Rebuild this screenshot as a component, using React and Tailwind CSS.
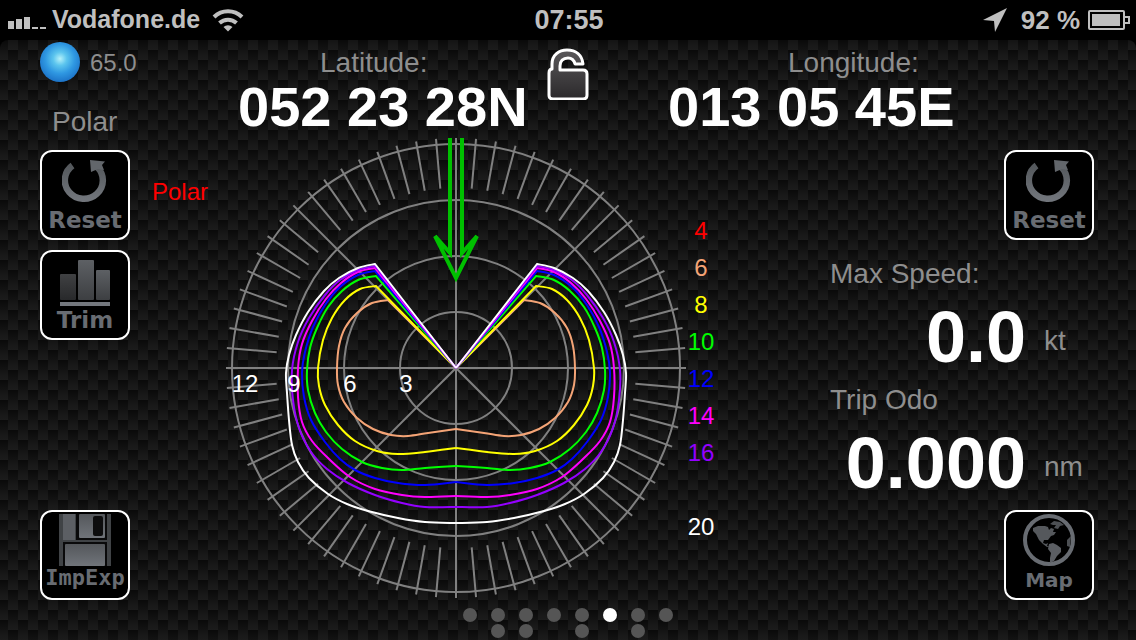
import React, { useState } from "react";

// polar curves, one half only (x, y from the centre of the dial)
const CURVES = [
  {
    color: "#f4a476",
    points: [[68, -68], [84, -65], [99, -55], [111, -40], [117, -22], [119, 0], [118, 17], [112, 34], [99, 50], [83, 61], [65, 67], [48, 68], [28, 65], [0, 61]],
  },
  {
    color: "#ffff00",
    points: [[80, -82], [96, -79], [111, -68], [124, -50], [133, -28], [138, 0], [137, 18], [131, 37], [118, 57], [101, 73], [79, 83], [58, 86], [31, 84], [0, 80]],
  },
  {
    color: "#00ff00",
    points: [[80, -92], [98, -88], [114, -77], [128, -61], [139, -40], [146, -20], [149, 2], [148, 22], [141, 45], [130, 64], [114, 81], [94, 94], [74, 100], [54, 102], [31, 100], [0, 98]],
  },
  {
    color: "#0000ff",
    points: [[81, -97], [98, -93], [116, -81], [131, -63], [143, -41], [151, -16], [154, 5], [152, 29], [145, 52], [131, 74], [116, 91], [101, 102], [81, 110], [58, 115], [31, 117], [0, 114]],
  },
  {
    color: "#ff00ff",
    points: [[81, -100], [98, -96], [115, -85], [130, -69], [144, -47], [154, -24], [158, 0], [158, 29], [154, 54], [144, 73], [128, 90], [106, 109], [81, 121], [54, 127], [31, 129], [0, 128]],
  },
  {
    color: "#9400ff",
    points: [[81, -102], [98, -98], [116, -88], [131, -73], [147, -50], [158, -26], [164, 2], [163, 32], [157, 60], [145, 84], [129, 101], [108, 115], [81, 127], [54, 135], [31, 139], [0, 139]],
  },
  {
    color: "#ffffff",
    points: [[81, -104], [98, -100], [117, -90], [132, -77], [148, -56], [160, -33], [167, -13], [170, 5], [169, 25], [167, 52], [164, 77], [158, 94], [147, 110], [128, 126], [109, 136], [88, 143], [58, 150], [31, 154], [0, 155]],
  },
];

const WIND_SPEEDS = [
  { value: "4", className: "text-[#ff0000]" },
  { value: "6", className: "text-[#f4a476]" },
  { value: "8", className: "text-[#ffff00]" },
  { value: "10", className: "text-[#00ff00]" },
  { value: "12", className: "text-[#0000ff]" },
  { value: "14", className: "text-[#ff00ff]" },
  { value: "16", className: "text-[#9400ff]" },
  { value: "", className: "" },
  { value: "20", className: "text-white" },
];

// null = no page in that spot of the second row
const PAGES = [0, 1, 2, 3, 4, 5, 6, 7, null, 8, 9, null, 10, null, 11, null];

// smooth line through all points (Catmull-Rom to bezier)
const smoothPath = (pts) => {
  let d = `M0 0L${pts[0][0]} ${pts[0][1]}`;
  for (let i = 0; i < pts.length - 1; i++) {
    const p0 = pts[i - 1] || pts[i];
    const p1 = pts[i];
    const p2 = pts[i + 1];
    const p3 = pts[i + 2] || p2;
    d += `C${p1[0] + (p2[0] - p0[0]) / 6} ${p1[1] + (p2[1] - p0[1]) / 6} `;
    d += `${p2[0] - (p3[0] - p1[0]) / 6} ${p2[1] - (p3[1] - p1[1]) / 6} `;
    d += `${p2[0]} ${p2[1]}`;
  }
  return d;
};

const StatusBar = () => (
  <header className="flex h-10 items-center bg-black pl-2 pr-1.5 font-bold text-[#bfbfbf]">
    <div className="flex flex-1 items-center">
      <svg width="38" height="12" viewBox="0 0 38 12" className="mt-1.5" fill="currentColor" aria-hidden="true">
        <rect x="0" y="4" width="6" height="8" />
        <rect x="8" y="2" width="6" height="10" />
        <rect x="16" y="0" width="6" height="12" />
        <rect x="24" y="10" width="6" height="2" />
        <rect x="32" y="10" width="6" height="2" />
      </svg>
      <span className="ml-1.5 text-[25px]">Vodafone.de</span>
      <svg className="ml-3" width="32" height="24" viewBox="0 0 32 24" fill="none" stroke="currentColor" strokeWidth="4" aria-hidden="true">
        <path d="M2 9a20 20 0 0 1 28 0" />
        <path d="M7.5 15a12.500 12.500 0 0 1 17 0" />
        <path d="M16 23.500l-4.500-4.500a6.500 6.500 0 0 1 9 0z" fill="currentColor" stroke="none" />
      </svg>
    </div>
    <span className="text-[27px]">07:55</span>
    <div className="flex flex-1 items-center justify-end">
      <svg width="24" height="24" viewBox="0 0 24 24" fill="currentColor" aria-hidden="true">
        <path d="M24 0L0 12l11 1 1 11z" />
      </svg>
      <span className="ml-3.5 text-[26px]">92 %</span>
      <svg className="ml-2" width="42" height="20" viewBox="0 0 42 20" aria-hidden="true">
        <rect x="1" y="1" width="35" height="18" rx="1" fill="none" stroke="currentColor" strokeWidth="2" />
        <rect x="4" y="4" width="28" height="12" fill="currentColor" />
        <path d="M37 7h4v6h-4" fill="none" stroke="currentColor" strokeWidth="2" />
      </svg>
    </div>
  </header>
);

const ResetIcon = () => (
  <svg width="46" height="46" viewBox="0 0 46 46" aria-hidden="true">
    <defs>
      <linearGradient id="resetFill" x1="0" y1="0" x2="0" y2="1">
        <stop offset="0" stopColor="#54585c" />
        <stop offset="1" stopColor="#71757b" />
      </linearGradient>
    </defs>
    <path d="M10.500 5.500A19 18.500 0 1 0 35 7" fill="none" stroke="url(#resetFill)" strokeWidth="6.500" />
    <path d="M28 0L43 1.500L40 5L42 10L36 9L29 12z" fill="#62666b" />
  </svg>
);

const TrimIcon = () => (
  <svg width="50" height="46" viewBox="0 0 50 46" aria-hidden="true">
    <defs>
      <linearGradient id="barDark" x1="0" y1="0" x2="0" y2="1">
        <stop offset="0" stopColor="#404143" />
        <stop offset="1" stopColor="#28292b" />
      </linearGradient>
      <linearGradient id="barLight" x1="0" y1="0" x2="0" y2="1">
        <stop offset="0" stopColor="#5d6064" />
        <stop offset="1" stopColor="#3d3f42" />
      </linearGradient>
    </defs>
    <rect x="0" y="14" width="16" height="26" rx="1" fill="url(#barDark)" />
    <rect x="18" y="0" width="16" height="40" rx="1" fill="url(#barLight)" />
    <rect x="36" y="10" width="14" height="30" rx="1" fill="url(#barLight)" />
    <rect x="0" y="42" width="50" height="4" fill="#74787e" />
  </svg>
);

const DiskIcon = () => (
  <svg width="52" height="52" viewBox="0 0 52 52" aria-hidden="true">
    <defs>
      <linearGradient id="diskFill" x1="0" y1="0" x2="0" y2="1">
        <stop offset="0" stopColor="#54575b" />
        <stop offset="1" stopColor="#70747a" />
      </linearGradient>
    </defs>
    <rect width="52" height="52" fill="#404346" />
    <rect x="4" y="0" width="12" height="26" fill="#5c5f64" />
    <path d="M17 0h31v26H17z" fill="#0a0a0b" />
    <rect x="20" y="0" width="26" height="24" rx="1" fill="url(#diskFill)" />
    <rect x="34" y="2" width="10" height="20" rx="2" fill="#0d0d0e" />
    <path d="M4 28h44v24H4z" fill="#0a0a0b" />
    <rect x="6" y="30" width="40" height="22" rx="1" fill="url(#diskFill)" />
  </svg>
);

const GlobeIcon = () => (
  <svg width="52" height="52" viewBox="0 0 52 52" aria-hidden="true">
    <circle cx="26" cy="26" r="24" fill="#000" stroke="#686c72" strokeWidth="4" />
    <path
      d="M10 14l5-2 7 0 3 1 1 3 2-2 3 1-1 3 3 0-2 3-3 1-3 4-4 0-1 3 3 1 2-1-1 3 3 1-3 0-4-3-4-4-3-6-3-3z"
      fill="#55585c"
    />
    <path d="M27 10l4-3 6 1 4 3-4 1-2 3-4-1 2-3-3 0z" fill="#4c4f53" />
    <path d="M26 30l4-1 4 2 4 3 0 4-4 4-3 5-4 2 0-5 1-5-3-4z" fill="#5b5e63" />
    <path d="M48 22l-4 4 0 6 3 1z" fill="#4c4f53" />
  </svg>
);

const LockIcon = () => (
  <svg width="42" height="52" viewBox="0 0 42 52" aria-hidden="true">
    <defs>
      <linearGradient id="lockFill" x1="0" y1="0" x2="0" y2="1">
        <stop offset="0" stopColor="#5a585a" />
        <stop offset="1" stopColor="#2b292b" />
      </linearGradient>
    </defs>
    <path
      d="M5 21V16C5 7 12 2 20 2c9 0 15 5 16 14h-8c-1-4-3-6-7-6-5 0-8 3-8 8v4h23q4 0 4 4v21q0 4-4 4H6q-4 0-4-4V25q0-4 3-4z"
      fill="url(#lockFill)"
      stroke="#fff"
      strokeWidth="3"
      strokeLinejoin="round"
    />
  </svg>
);

const IconButton = ({ icon, label, labelClass }) => (
  <button
    type="button"
    className="flex h-[90px] w-[90px] shrink-0 flex-col items-center overflow-hidden rounded-xl border-2 border-white bg-black pt-0.5"
  >
    <span className="flex h-[52px] items-end">{icon}</span>
    <span className={`whitespace-nowrap font-bold text-[#686c72] ${labelClass}`}>{label}</span>
  </button>
);

const SANS_LABEL = "font-['DejaVu_Sans'] text-[23px] leading-7";

const Coordinate = ({ label, value, className, labelClass }) => (
  <div className={className}>
    <p className={`text-[28px] leading-8 text-[#8e8e8e] ${labelClass}`}>{label}</p>
    <p className="whitespace-nowrap text-[56px] font-bold leading-[56px] text-white">{value}</p>
  </div>
);

const Reading = ({ label, value, unit }) => (
  <div>
    <p className="text-[28px] leading-8 text-[#8e8e8e]">{label}</p>
    <div className="flex items-center leading-[94px]">
      <span className="w-[196px] text-right text-[72px] font-bold text-white">{value}</span>
      <span className="ml-[18px] pt-2 text-[28px] leading-8 text-[#8e8e8e]">{unit}</span>
    </div>
  </div>
);

const PolarDial = () => {
  const ticks = [];
  for (let a = 5; a < 360; a += 5) {
    if (a % 45 !== 0) ticks.push(a);
  }

  return (
    <svg className="w-[460px] shrink-0 self-start" viewBox="-230 -230 460 460" role="img" aria-label="Polar diagram">
      {/* GRID */}
      <g fill="none" stroke="#808080" strokeWidth="2">
        {[56, 112, 168, 224].map((r) => (
          <circle key={r} r={r} />
        ))}
        {[0, 45, 90, 135].map((a) => (
          <line key={a} y1="-230" y2="230" transform={`rotate(${a})`} />
        ))}
        {ticks.map((a) => (
          <line key={a} y1="-230" y2="-180" transform={`rotate(${a})`} />
        ))}
      </g>

      {/* WIND ARROW */}
      <path
        d="M-6 -230V-115L-21 -132L0 -90L21 -132L6 -115V-230"
        fill="none"
        stroke="#00c000"
        strokeWidth="4"
      />

      {/* CURVES */}
      {CURVES.map((c) => (
        <g key={c.color} fill="none" stroke={c.color} strokeWidth="2">
          <path d={smoothPath(c.points)} />
          <path d={smoothPath(c.points)} transform="scale(-1 1)" />
        </g>
      ))}

      {/* SPEED SCALE */}
      <g fill="#fff" fontSize="24" textAnchor="middle">
        <text x="-211" y="24">12</text>
        <text x="-162" y="24">9</text>
        <text x="-106" y="24">6</text>
        <text x="-50" y="24">3</text>
      </g>
    </svg>
  );
};

const App = () => {
  const [page, setPage] = useState(5);

  return (
    <div className="flex min-h-screen flex-col bg-black font-['Liberation_Sans',Arial,sans-serif]">
      <StatusBar />

      <main className="flex flex-1 flex-col rounded-t-lg bg-[linear-gradient(rgba(255,255,255,0),rgba(255,255,255,0.035)),repeating-conic-gradient(#141414_0_25%,#0a0a0a_0_50%)] bg-[length:10px_10px,20px_20px] bg-[position:0_0,-2px_0]">
        {/* TOP ROW */}
        <section className="flex h-[98px] items-start">
          <div className="w-[238px] shrink-0 pl-10 text-[#8e8e8e]">
            <div className="flex items-center pt-0.5">
              <span className="h-10 w-10 rounded-full bg-[radial-gradient(circle_at_50%_42%,#b5f1fa_0%,#5cc5ee_22%,#2f98e2_48%,#1d74c8_75%,#12508f_100%)]" />
              <span className="ml-2.5 pt-0.5 text-[24px]">65.0</span>
            </div>
            <p className="ml-3 mt-6 text-[28px] leading-8">Polar</p>
          </div>
          <Coordinate label="Latitude:" value="052 23 28N" className="w-[289px] pt-[7px]" labelClass="pl-[82px]" />
          <button type="button" aria-label="Unlock" className="ml-5 mt-2">
            <LockIcon />
          </button>
          <Coordinate label="Longitude:" value="013 05 45E" className="ml-[79px] pt-[7px]" labelClass="pl-[120px]" />
        </section>

        {/* DIAL ROW */}
        <section className="flex flex-1">
          <div className="flex w-[226px] shrink-0 flex-col gap-2.5 pl-10 pt-3">
            <div className="flex items-center gap-[22px]">
              <IconButton icon={<ResetIcon />} label="Reset" labelClass={SANS_LABEL} />
              <span className="-mt-1.5 text-[24px] text-[#ff0000]">Polar</span>
            </div>
            <IconButton icon={<TrimIcon />} label="Trim" labelClass={SANS_LABEL} />
            <div className="mt-auto">
              <IconButton
                icon={<DiskIcon />}
                label="ImpExp"
                labelClass="font-['DejaVu_Sans_Mono'] text-[22px] leading-6"
              />
            </div>
          </div>

          <PolarDial />

          <ul className="w-[30px] shrink-0 pt-[74px] text-center text-[24px] leading-[37px]">
            {WIND_SPEEDS.map((s, i) => (
              <li key={i} className={`h-[37px] ${s.className}`}>
                {s.value}
              </li>
            ))}
          </ul>

          <div className="ml-auto flex w-[306px] shrink-0 flex-col pr-[42px] pt-3">
            <div className="flex justify-end">
              <IconButton icon={<ResetIcon />} label="Reset" labelClass={SANS_LABEL} />
            </div>
            <div className="mt-[18px]">
              <Reading label="Max Speed:" value="0.0" unit="kt" />
              <Reading label="Trip Odo" value="0.000" unit="nm" />
            </div>
            <div className="mt-auto flex justify-end">
              <IconButton icon={<GlobeIcon />} label="Map" labelClass="font-['DejaVu_Sans'] text-[20px] leading-7" />
            </div>
          </div>
        </section>

        {/* PAGER */}
        <nav className="flex justify-center pb-0.5 pt-2" aria-label="Pages">
          <div className="grid grid-cols-8 gap-x-3.5 gap-y-0.5">
            {PAGES.map((p, i) =>
              p === null ? (
                <span key={i} />
              ) : (
                <button
                  key={i}
                  type="button"
                  aria-label={`Page ${p + 1}`}
                  onClick={() => setPage(p)}
                  className={`h-3.5 w-3.5 rounded-full ${p === page ? "bg-white" : "bg-[#555]"}`}
                />
              ),
            )}
          </div>
        </nav>
      </main>
    </div>
  );
};

export default App;
